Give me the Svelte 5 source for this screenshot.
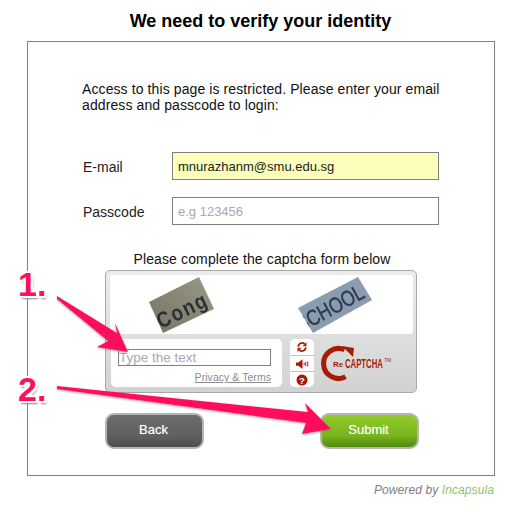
<script>
  let email = $state('mnurazhanm@smu.edu.sg');
  let passcode = $state('');
  let answer = $state('');
</script>

<div class="page">
  <h1>We need to verify your identity</h1>

  <div class="frame">
    <p class="intro">Access to this page is restricted. Please enter your email address and passcode to login:</p>

    <div class="field">
      <label for="email">E-mail</label>
      <input id="email" class="filled" bind:value={email} />
    </div>
    <div class="field second">
      <label for="passcode">Passcode</label>
      <input id="passcode" placeholder="e.g 123456" bind:value={passcode} />
    </div>

    <p class="captcha-title">Please complete the captcha form below</p>

    <div class="captcha">
      <div class="challenge">
        <svg width="303" height="59" viewBox="109 275 303 59">
          <defs>
            <filter id="soft"><feGaussianBlur stdDeviation="0.6" /></filter>
            <linearGradient id="paper" x1="0" y1="1" x2="1" y2="0">
              <stop offset="0" stop-color="#747365" />
              <stop offset="1" stop-color="#9b9a86" />
            </linearGradient>
            <clipPath id="strip"><polygon points="297,308 357,277 371,300 312,333" /></clipPath>
          </defs>
          <g filter="url(#soft)">
            <polygon points="148,302 198,277 213,309 162,333" fill="url(#paper)" />
            <text class="word" transform="translate(160 329) rotate(-26) scale(0.85 1)" font-size="22" font-weight="700" letter-spacing="2" fill="#2c2d35">Cong</text>
            <polygon points="297,308 357,277 371,300 312,333" fill="#8a9cad" />
            <g clip-path="url(#strip)">
              <text class="word" transform="translate(300 333) rotate(-29) scale(0.8 1)" font-size="22" stroke="#2f3a50" stroke-width="0.4" fill="#2f3a50">SCHOOL</text>
            </g>
          </g>
        </svg>
      </div>

      <div class="controls">
        <div class="entry">
          <input placeholder="Type the text" bind:value={answer} />
          <span class="terms">Privacy &amp; Terms</span>
        </div>

        <div class="buttons">
          <div class="tool">
            <svg width="12" height="12" viewBox="0 0 16 16">
              <path d="M3 7.500A5 5 0 0 1 11.500 4" fill="none" stroke="#a81a08" stroke-width="2.400" />
              <path d="M14 1.500V7H8.800Z" fill="#a81a08" />
              <path d="M13 8.500A5 5 0 0 1 4.500 12" fill="none" stroke="#a81a08" stroke-width="2.400" />
              <path d="M2 14.500V9H7.200Z" fill="#a81a08" />
            </svg>
          </div>
          <div class="tool">
            <svg width="13" height="10" viewBox="0 0 16 12">
              <path d="M0 4H3L8 0V12L3 8H0Z" fill="#a81a08" />
              <path d="M10 4.500V7.500M12 3.500V8.500M14.500 3V9" stroke="#a81a08" stroke-width="1.200" />
            </svg>
          </div>
          <div class="tool">
            <svg width="14" height="14" viewBox="0 0 14 14">
              <circle cx="7" cy="7" r="5.500" fill="#a81a08" />
              <text x="7" y="10.500" text-anchor="middle" font-size="9.500" font-weight="700" font-family="Liberation Sans, sans-serif" fill="#fff">?</text>
            </svg>
          </div>
        </div>

        <svg class="logo" width="74" height="42" viewBox="0 0 74 42">
          <path d="M23.500 7.700A15 15 0 1 0 24.500 34.800" fill="none" stroke="#a81a08" stroke-width="5" />
          <path d="M21 4L33 6L32 15Z" fill="#a81a08" />
          <text x="12" y="25" font-size="8" font-weight="700" font-family="Liberation Sans, sans-serif" fill="#a81a08">Re</text>
          <text transform="translate(24 25.500) scale(0.62 1)" font-size="12.500" font-weight="700" font-family="Liberation Sans, sans-serif" fill="#a81a08">CAPTCHA</text>
          <text x="63" y="20" font-size="5" font-weight="700" font-family="Liberation Sans, sans-serif" fill="#b9655a">TM</text>
        </svg>
      </div>
    </div>

    <div class="actions">
      <button class="back">Back</button>
      <button class="submit">Submit</button>
    </div>
  </div>

  <p class="powered">Powered by <span>Incapsula</span></p>

  <span class="step one">1.</span>
  <span class="step two">2.</span>

  <svg class="arrows" width="524" height="515" viewBox="0 0 524 515">
    <defs>
      <filter id="glow" x="-10%" y="-10%" width="120%" height="130%">
        <feDropShadow dx="0" dy="1" stdDeviation="1.200" flood-color="#777" flood-opacity="0.7" />
      </filter>
    </defs>
    <g filter="url(#glow)" fill="#ff0f5c">
      <polygon points="57,296 117,333 115,323 128,352 97,347 108,341 57,299" />
      <polygon points="57,386 308,412 305,403 331,429 302,434 306,423 57,389" />
    </g>
  </svg>
</div>

<style>
  :global(body) {
    background: #fff;
  }

  .page {
    position: relative;
    width: 524px;
    height: 515px;
    font-family: "Liberation Sans", Arial, sans-serif;
    color: #111;
    overflow: hidden;
  }

  h1 {
    margin: 0;
    padding-top: 11px;
    height: 41px;
    box-sizing: border-box;
    width: 521px;
    text-align: center;
    font-size: 18px;
    line-height: 21px;
    font-weight: 700;
    color: #000;
  }

  .frame {
    box-sizing: border-box;
    margin-left: 27px;
    width: 468px;
    height: 435px;
    border: 1px solid #808080;
    padding: 39px 55px 0 54px;
  }

  .intro {
    margin: 0;
    font-size: 14px;
    line-height: 16px;
    letter-spacing: 0.1px;
    height: 32px;
    width: 360px;
  }

  .field {
    display: flex;
    align-items: center;
    margin-top: 39px;
    height: 28px;
  }

  .field.second {
    margin-top: 17px;
  }

  label {
    width: 89px;
    margin-left: 1px;
    padding-top: 2px;
    font-size: 14px;
    color: #222;
  }

  .field input {
    box-sizing: border-box;
    width: 267px;
    height: 28px;
    padding: 0 5px;
    border: 1px solid #808080;
    border-radius: 0;
    outline: none;
    font: 13px "Liberation Sans", Arial, sans-serif;
    color: #222;
    background: #fff;
  }

  .field input.filled {
    background: #fbffbb;
  }

  input::placeholder {
    color: #a9a9a9;
    opacity: 1;
  }

  .captcha-title {
    margin: 26px 0 0;
    width: 360px;
    text-align: center;
    font-size: 14px;
    line-height: 16px;
    letter-spacing: 0.13px;
    height: 17px;
  }

  .captcha {
    box-sizing: border-box;
    margin: 2px 0 0 23px;
    width: 312px;
    height: 123px;
    padding: 4px;
    border: 1px solid #a8a8a8;
    border-radius: 5px;
    background: linear-gradient(#ececec, #d2d2d2);
  }

  .challenge {
    width: 303px;
    height: 59px;
    background: #fff;
    border-radius: 3px;
  }

  .challenge svg {
    display: block;
  }

  .word {
    font-family: "Liberation Sans", Arial, sans-serif;
  }

  .controls {
    display: flex;
    align-items: flex-start;
    margin-top: 5px;
    margin-left: 1px;
  }

  .entry {
    box-sizing: border-box;
    display: flex;
    flex-direction: column;
    align-items: flex-end;
    width: 171px;
    height: 48px;
    padding: 10px 11px 0 6px;
    background: #fff;
    border-radius: 5px;
  }

  .entry input {
    box-sizing: border-box;
    width: 153px;
    height: 17px;
    padding: 0;
    border: 1px solid #808080;
    outline: none;
    border-radius: 0;
    font: 13.500px/15px "Liberation Sans", Arial, sans-serif;
    background: #fff;
  }

  .terms {
    margin-top: 5px;
    font-size: 10.500px;
    line-height: 13px;
    letter-spacing: 0.05px;
    color: #8c8c8c;
    text-decoration: underline;
  }

  .buttons {
    margin-left: 8px;
    width: 24px;
    height: 48px;
    display: flex;
    flex-direction: column;
    background: #fff;
    border-radius: 5px;
  }

  .tool {
    height: 16px;
    display: flex;
    align-items: center;
    justify-content: center;
  }

  .tool + .tool {
    border-top: 1px solid #c4c4c4;
    box-sizing: border-box;
  }

  .logo {
    display: block;
    margin: 3px 0 0 7px;
  }

  .actions {
    display: flex;
    justify-content: space-between;
    margin: 20px 0 0 23px;
    width: 314px;
  }

  button {
    box-sizing: border-box;
    width: 99px;
    height: 36px;
    padding: 0 2px 3px 0;
    border: 2px solid #b5b5b5;
    border-radius: 9px;
    font: 13px "Liberation Sans", Arial, sans-serif;
    color: #fff;
    text-shadow: 0 0 1px rgba(255, 255, 255, 0.5);
  }

  .back {
    background: linear-gradient(#6d6d6d, #5e5e5e 70%, #4c4c4c);
  }

  .submit {
    background: linear-gradient(#93cb2b, #79b41c 65%, #4f8a0e);
  }

  .powered {
    margin: 7px 30px 0 0;
    text-align: right;
    font-size: 12px;
    line-height: 14px;
    letter-spacing: 0.1px;
    font-style: italic;
    color: #808080;
  }

  .powered span {
    color: #8cc56a;
  }

  .step {
    position: absolute;
    left: 18px;
    font-size: 34px;
    line-height: 34px;
    font-weight: 700;
    color: #ff0f5c;
    text-shadow: -2px 0 0 #fff, 2px 0 0 #fff, 0 -2px 0 #fff, 0 2px 0 #fff, -2px -2px 0 #fff, 2px -2px 0 #fff, -2px 2px 0 #fff, 2px 2px 0 #fff, 2px 3px 2px #888;
  }

  .step.one {
    top: 267px;
  }

  .step.two {
    top: 372px;
  }

  .arrows {
    position: absolute;
    left: 0;
    top: 0;
    pointer-events: none;
  }
</style>
